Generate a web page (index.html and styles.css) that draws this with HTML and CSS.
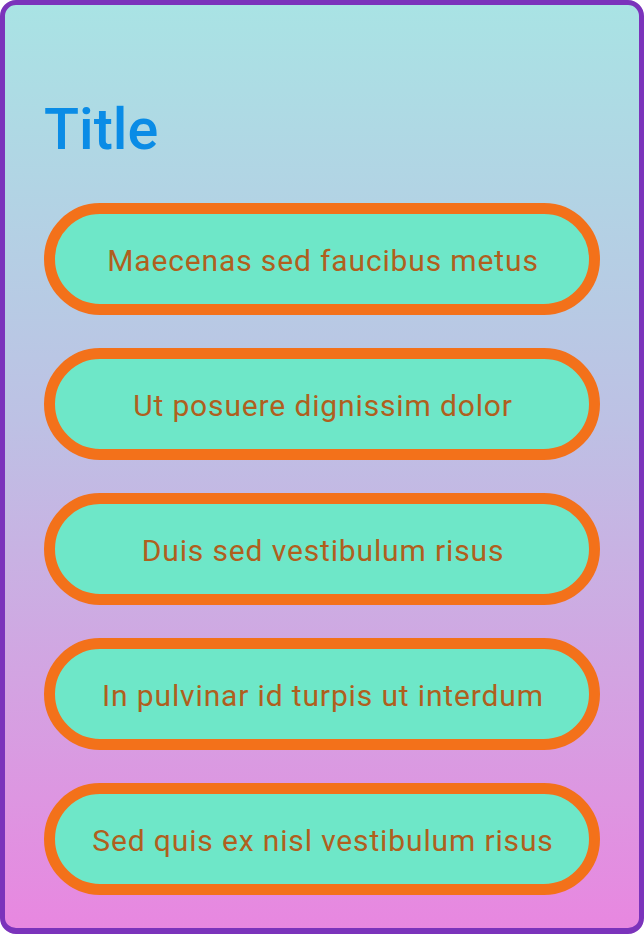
FILE: index.html
```html
<!DOCTYPE html>
<html>
<head>
<meta charset="utf-8">
<link rel="stylesheet" href="styles.css">
</head>
<body>
<div class="frame">
  <h1 class="title">Title</h1>
  <div class="list">
    <div class="pill">Maecenas sed faucibus metus</div>
    <div class="pill">Ut posuere dignissim dolor</div>
    <div class="pill">Duis sed vestibulum risus</div>
    <div class="pill">In pulvinar id turpis ut interdum</div>
    <div class="pill">Sed quis ex nisl vestibulum risus</div>
  </div>
</div>
</body>
</html>
```
FILE: styles.css
```css
html, body {
  margin: 0;
  padding: 0;
}
body {
  width: 644px;
  height: 934px;
  font-family: Roboto, "Liberation Sans", sans-serif;
}
.frame {
  box-sizing: border-box;
  width: 644px;
  height: 934px;
  border: 5px solid #7b33bb;
  border-bottom-width: 6px;
  border-radius: 16px;
  background: linear-gradient(to bottom, #a9e3e4 0%, #bdc1e4 45%, #e887e0 100%);
  padding: 90px 39px 0 39px;
}
.title {
  margin: 0;
  font-size: 57.5px;
  font-weight: 500;
  line-height: 70px;
  color: #0a8ce6;
}
.list {
  margin-top: 38px;
  display: flex;
  flex-direction: column;
  gap: 33px;
}
.pill {
  box-sizing: border-box;
  height: 112px;
  border: 11px solid #f3711a;
  border-radius: 56px;
  background: #6ee7c8;
  display: flex;
  align-items: center;
  justify-content: center;
  padding-top: 2px;
  padding-left: 2px;
  font-size: 30px;
  letter-spacing: 0.86px;
  color: #b05f1e;
}
```
